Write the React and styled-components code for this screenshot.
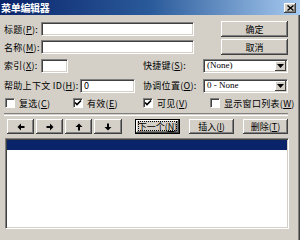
import React from 'react';
import styled, { createGlobalStyle } from 'styled-components';

const Global = createGlobalStyle`
html, body {
  margin: 0;
  padding: 0;
  background: #d4d0c8;
}
`

const Window = styled.div`
width: 300px;
height: 240px;
background: #d4d0c8;
box-shadow: inset -1px 0 #404040, inset -2px 0 #808080;
overflow: hidden;
font-family: "Noto Sans CJK SC", "Liberation Sans", sans-serif;
font-size: 9px;
line-height: 1;
color: #000;
`
const TitleBar = styled.div`
height: 15px;
display: flex;
align-items: center;
justify-content: space-between;
padding: 0 4px 0 1px;
background: linear-gradient(90deg, #0a246a 0%, #2a5a9a 50%, #a6caf0 100%);
`
const TitleText = styled.span`
color: #fff;
font-weight: bold;
font-size: 10px;
letter-spacing: -0.3px;
`
const CloseBtn = styled.div`
width: 12px;
height: 10px;
margin-top: 1px;
background: #d4d0c8;
box-shadow: inset -1px -1px #404040, inset 1px 1px #fff, inset -2px -2px #808080;
display: flex;
align-items: center;
justify-content: center;
`
const Body = styled.div`
padding: 6px 12px 0 4px;
display: flex;
flex-direction: column;
`
const Row = styled.div`
display: flex;
align-items: center;
height: ${p => p.$h}px;
margin-top: ${p => p.$mt || 0}px;
`
const Half = styled.div`
display: flex;
align-items: center;
width: ${p => p.$w}px;
`
const Label = styled.span`
width: ${p => p.$w}px;
white-space: nowrap;
letter-spacing: 0.3px;
`
const TextBox = styled.div`
width: ${p => p.$w}px;
height: 14px;
box-sizing: border-box;
background: #fff;
border: 1px solid;
border-color: #808080 #fff #fff #808080;
box-shadow: inset 1px 1px #404040, inset -1px -1px #d4d0c8;
padding: 0 3px;
line-height: 12px;
`
const Button = styled.div`
width: ${p => p.$w}px;
height: ${p => p.$h || 15}px;
margin-left: ${p => p.$ml || 0}px;
box-sizing: border-box;
display: flex;
align-items: center;
justify-content: center;
white-space: nowrap;
background: #d4d0c8;
box-shadow: ${p => p.$focus
  ? 'inset 0 0 0 1px #000, inset -2px -2px #404040, inset 2px 2px #fff, inset -3px -3px #808080'
  : 'inset -1px -1px #404040, inset 1px 1px #fff, inset -2px -2px #808080'};
position: relative;
`
const FocusRing = styled.span`
position: absolute;
inset: 2px 3px 3px 3px;
border: 1px dotted #000;
pointer-events: none;
`
const Combo = styled.div`
width: 85px;
height: 14px;
box-sizing: border-box;
display: flex;
align-items: center;
background: #fff;
border: 1px solid;
border-color: #808080 #fff #fff #808080;
box-shadow: inset 1px 1px #404040, inset -1px -1px #d4d0c8;
padding: 1px 1px 1px 3px;
`
const ComboText = styled.span`
flex: 1;
font-family: "Liberation Serif", serif;
font-size: 9px;
`
const ComboArrow = styled.div`
width: 11px;
height: 100%;
background: #d4d0c8;
box-shadow: inset -1px -1px #404040, inset 1px 1px #fff;
display: flex;
align-items: center;
justify-content: center;
`
const Checks = styled.div`
display: grid;
grid-template-columns: 68px 70px 67px auto;
height: 12px;
margin-top: 4px;
padding-left: 1px;
align-items: center;
`
const CheckItem = styled.div`
display: flex;
align-items: center;
gap: 4px;
white-space: nowrap;
letter-spacing: 0.3px;
`
const Box = styled.div`
width: 10px;
height: 10px;
box-sizing: border-box;
background: #fff;
border: 1px solid;
border-color: #808080 #fff #fff #808080;
box-shadow: inset 1px 1px #404040;
display: flex;
align-items: center;
justify-content: center;
`
const Separator = styled.div`
height: 1px;
margin-top: 4px;
border-top: 1px solid #808080;
border-bottom: 1px solid #fff;
`
const ButtonBar = styled.div`
display: flex;
align-items: center;
height: 15px;
margin-top: 3px;
padding-left: 3px;
gap: 2px;
`
const ListBox = styled.div`
width: 284px;
height: 91px;
margin-top: 4px;
margin-left: 1px;
box-sizing: border-box;
background: #fff;
border: 1px solid;
border-color: #808080 #fff #fff #808080;
box-shadow: inset 1px 1px #404040, inset -1px -1px #d4d0c8;
padding: 1px;
`
const SelectedRow = styled.div`
height: 10px;
background: #0a246a;
`

const Arrow = ({ dir }) => {
  const rot = { left: 180, right: 0, up: -90, down: 90 }[dir];
  return (
    <svg width="8" height="8" viewBox="0 0 8 8" style={{ transform: `rotate(${rot}deg)` }}>
      <rect x="0.5" y="3" width="4" height="2" fill="#000" />
      <polygon points="4,0.5 7.5,4 4,7.5" fill="#000" />
    </svg>
  );
};

const Down = () => (
  <svg width="7" height="4" viewBox="0 0 7 4"><polygon points="0,0 7,0 3.5,4" fill="#000" /></svg>
);

const Tick = () => (
  <svg width="8" height="8" viewBox="0 0 8 8">
    <polyline points="1,3.5 3,5.5 7,1.5" fill="none" stroke="#000" strokeWidth="1.6" />
  </svg>
);

const Check = ({ on, children }) => (
  <CheckItem>
    <Box>{on && <Tick />}</Box>
    <span>{children}</span>
  </CheckItem>
);

export default function App() {
  return (
    <>
      <Global />
      <Window>
        <TitleBar>
          <TitleText>菜单编辑器</TitleText>
          <CloseBtn>
            <svg width="7" height="6" viewBox="0 0 7 6">
              <path d="M0.5 0.5 L6.5 5.5 M6.5 0.5 L0.5 5.5" stroke="#000" strokeWidth="1.4" />
            </svg>
          </CloseBtn>
        </TitleBar>
        <Body>
          <Row $h={16}>
            <Label $w={37}>标题(<u>P</u>):</Label>
            <TextBox $w={153} />
            <Button $w={67} $h={16} style={{ marginLeft: 'auto' }}>确定</Button>
          </Row>
          <Row $h={16} $mt={2}>
            <Label $w={37}>名称(<u>M</u>):</Label>
            <TextBox $w={153} />
            <Button $w={67} $h={16} style={{ marginLeft: 'auto' }}>取消</Button>
          </Row>
          <Row $h={15} $mt={3}>
            <Half $w={139}>
              <Label $w={37}>索引(<u>X</u>):</Label>
              <TextBox $w={27} />
            </Half>
            <Label $w={60}>快捷键(<u>S</u>):</Label>
            <Combo>
              <ComboText>(None)</ComboText>
              <ComboArrow><Down /></ComboArrow>
            </Combo>
          </Row>
          <Row $h={15} $mt={5}>
            <Half $w={139}>
              <Label $w={76}>帮助上下文 ID(<u>H</u>):</Label>
              <TextBox $w={55}>0</TextBox>
            </Half>
            <Label $w={60}>协调位置(<u>O</u>):</Label>
            <Combo>
              <ComboText>0 - None</ComboText>
              <ComboArrow><Down /></ComboArrow>
            </Combo>
          </Row>
          <Checks>
            <Check>复选(<u>C</u>)</Check>
            <Check on>有效(<u>E</u>)</Check>
            <Check on>可见(<u>V</u>)</Check>
            <Check>显示窗口列表(<u>W</u>)</Check>
          </Checks>
          <Separator />
          <ButtonBar>
            <Button $w={27}><Arrow dir="left" /></Button>
            <Button $w={27}><Arrow dir="right" /></Button>
            <Button $w={27}><Arrow dir="up" /></Button>
            <Button $w={28}><Arrow dir="down" /></Button>
            <Button $w={45} $ml={11} $focus>下一个(<u>N</u>)<FocusRing /></Button>
            <Button $w={45} $ml={7}>插入(<u>I</u>)</Button>
            <Button $w={45} $ml={7}>删除(<u>T</u>)</Button>
          </ButtonBar>
          <ListBox>
            <SelectedRow />
          </ListBox>
        </Body>
      </Window>
    </>
  );
}
